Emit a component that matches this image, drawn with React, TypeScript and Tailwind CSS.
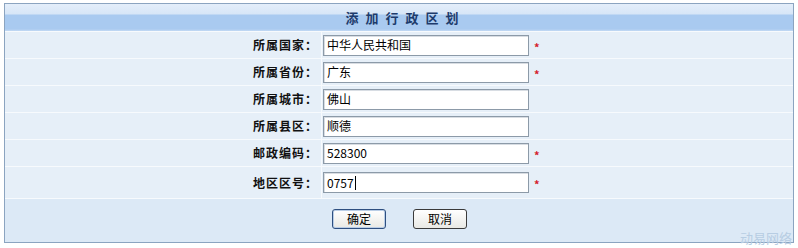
import React from 'react';

interface Field {
    label: string;
    value: string;
    required?: boolean;
    caret?: boolean;
}

const fields: Field[] = [
    { label: '所属国家：', value: '中华人民共和国', required: true },
    { label: '所属省份：', value: '广东', required: true },
    { label: '所属城市：', value: '佛山' },
    { label: '所属县区：', value: '顺德' },
    { label: '邮政编码：', value: '528300', required: true },
    { label: '地区区号：', value: '0757', required: true, caret: true },
];

const font = { fontFamily: '"Noto Sans CJK SC", "Liberation Sans", sans-serif' };

export default function App() {
    return (
        <div className="relative w-[798px] h-[248px] bg-white text-[12px] text-black" style={font}>
            <div className="ml-[4px] pt-[3px] w-[790px]">
                <div className="border border-[#8ba4c0] bg-[#e6eff8]">
                    {/* Header */}
                    <div className="h-[27px] flex items-center justify-center gap-[7px] pl-[6px] bg-[linear-gradient(to_bottom,#e4eefa_0px,#d7e6f7_10px,#a9caf0_11px,#a9caf0_25px,#c4daf3_27px)] font-bold text-[#1d3b6c] text-[13px] leading-none">
                        {['添', '加', '行', '政', '区', '划'].map((c, i) => (
                            <span key={i}>{c}</span>
                        ))}
                    </div>

                    {/* Rows */}
                    {fields.map((f, i) => (
                        <div
                            key={f.label}
                            className={
                                'flex border-t border-[#f7fafd] ' +
                                (i === fields.length - 1 ? 'h-[32px]' : 'h-[27px]')
                            }
                        >
                            <div className="w-[316px] flex items-center justify-end pr-[3px] font-bold text-[12px] tracking-[1px] text-[#111]">
                                {f.label}
                            </div>
                            <div className="w-px bg-[#f7fafd]" />
                            <div className="flex items-center pl-[1px]">
                                <div className="w-[206px] h-[21px] border border-[#8c9aa8] bg-white flex items-center pl-[3px] text-[12px] leading-none shadow-[inset_1px_1px_0_#d8dde3]">
                                    {f.value}
                                    {f.caret && <span className="inline-block w-px h-[14px] bg-black ml-[1px]" />}
                                </div>
                                {f.required && <span className="ml-[5px] mt-[4px] text-[#d4202a] text-[11px] font-bold leading-none">*</span>}
                            </div>
                        </div>
                    ))}

                    {/* Footer */}
                    <div className="h-[44px] border-t border-[#f7fafd] bg-[#dce9f6] flex items-start pt-[10px] pl-[327px] gap-[27px]">
                        <button className="w-[54px] h-[20px] rounded-[3px] border border-[#2e4f80] bg-[linear-gradient(to_bottom,#ffffff,#e9e9e4)] text-[12px] leading-none shadow-[inset_0_0_0_1px_#b9cde6]">
                            确定
                        </button>
                        <button className="w-[54px] h-[20px] rounded-[3px] border border-[#3a3a3a] bg-[linear-gradient(to_bottom,#ffffff,#e9e9e4)] text-[12px] leading-none">
                            取消
                        </button>
                    </div>
                </div>
            </div>

            {/* Watermark */}
            <span className="absolute right-[6px] top-[231px] text-[13px] text-[#b7cde3] leading-none">动易网络</span>
        </div>
    );
}
